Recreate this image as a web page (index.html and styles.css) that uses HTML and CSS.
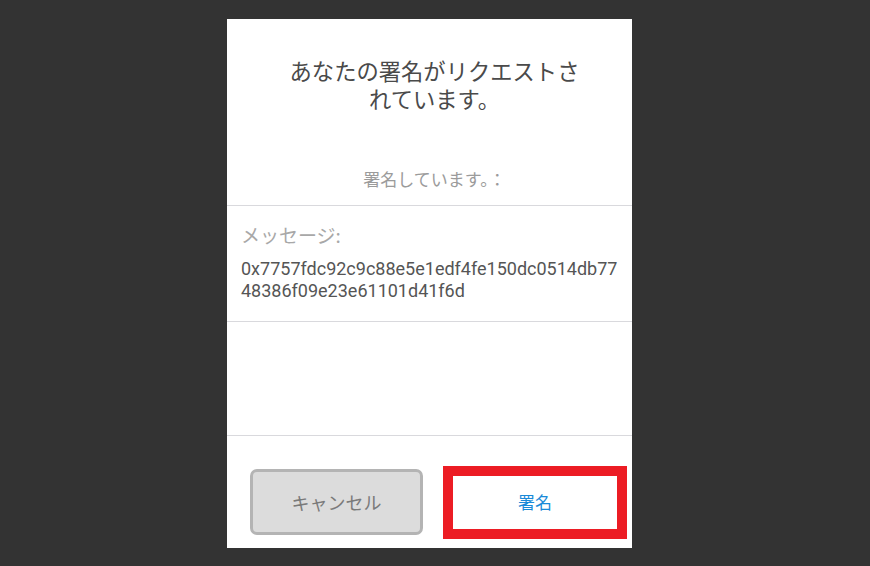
FILE: index.html
```html
<!DOCTYPE html>
<html lang="ja">
<head>
<meta charset="utf-8">
<title>署名リクエスト</title>
<link rel="stylesheet" href="styles.css">
</head>
<body>
<div class="panel">
  <section class="head">
    <h1 class="title">あなたの署名がリクエストされています。</h1>
    <p class="subtitle">署名しています。：</p>
  </section>
  <section class="message">
    <div class="label">メッセージ:</div>
    <div class="hex">0x7757fdc92c9c88e5e1edf4fe150dc0514db7748386f09e23e61101d41f6d</div>
  </section>
  <div class="spacer"></div>
  <footer class="actions">
    <button class="btn cancel">キャンセル</button>
    <button class="btn sign">署名</button>
  </footer>
</div>
</body>
</html>
```
FILE: styles.css
```css
html, body {
  margin: 0;
  padding: 0;
  background: #333333;
  height: 566px;
  overflow: hidden;
}
body {
  font-family: "Noto Sans CJK JP", "Noto Sans", sans-serif;
}
.panel {
  margin: 19px 0 0 227px;
  width: 405px;
  height: 529px;
  background: #ffffff;
  display: flex;
  flex-direction: column;
}
.head {
  padding: 37px 0 14px 10px;
  border-bottom: 1px solid #d9d9dd;
  text-align: center;
}
.title {
  margin: 0 auto;
  width: 302px;
  font-size: 22.3px;
  font-weight: 400;
  line-height: 28px;
  color: #4a4a4a;
}
.subtitle {
  margin: 55px 0 0;
  font-size: 17px;
  line-height: 24px;
  color: #9b9b9b;
}
.message {
  padding: 17px 6px 19px 14px;
  border-bottom: 1px solid #d9d9dd;
}
.label {
  font-size: 19px;
  line-height: 24px;
  color: #a8a8a8;
}
.hex {
  margin-top: 11px;
  font-family: Roboto, "Liberation Sans", sans-serif;
  font-size: 18px;
  line-height: 22px;
  color: #555555;
  word-break: break-all;
}
.spacer {
  flex: 1;
  border-bottom: 1px solid #d9d9dd;
}
.actions {
  height: 112px;
  box-sizing: border-box;
  padding: 30px 5px 0 23px;
  display: flex;
  align-items: flex-start;
  gap: 20px;
}
.btn {
  font-family: "Noto Sans CJK JP", "Noto Sans", sans-serif;
  padding: 0;
  cursor: pointer;
}
.cancel {
  margin-top: 3px;
  width: 173px;
  height: 66px;
  background: #dcdcdc;
  border: 3px solid #b4b4b4;
  border-radius: 7px;
  font-size: 18px;
  color: #7a7a7a;
}
.sign {
  width: 184px;
  height: 73px;
  padding-bottom: 3px;
  background: #ffffff;
  border: 10px solid #ec1c24;
  border-radius: 0;
  font-size: 17px;
  color: #1a8ad8;
}
```
